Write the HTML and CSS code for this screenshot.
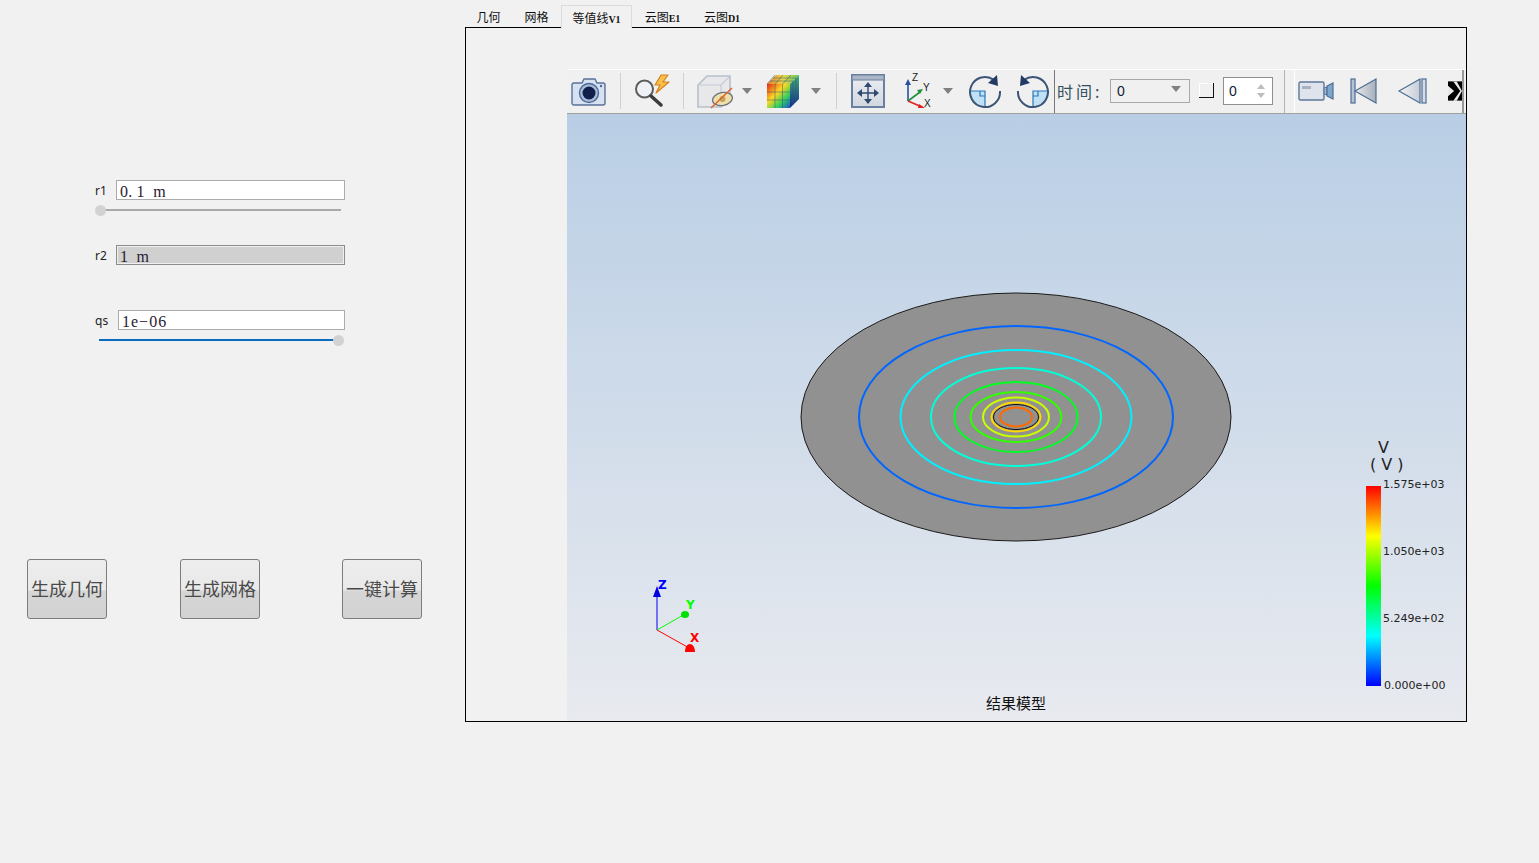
FILE: index.html
```html
<!DOCTYPE html>
<html lang="zh">
<head>
<meta charset="utf-8">
<title>结果模型</title>
<link rel="stylesheet" href="styles.css">
</head>
<body>
<main class="app">
  <section class="params">
    <div class="row row-r1">
      <span class="label label-r">r1</span>
      <div class="field">0. 1&nbsp; m</div>
    </div>
    <div class="slider slider-r1"><span class="thumb"></span></div>
    <div class="row row-r2">
      <span class="label label-r">r2</span>
      <div class="field field-off">1&nbsp; m</div>
    </div>
    <div class="row row-qs">
      <span class="label label-q">qs</span>
      <div class="field field-num">1e−06</div>
    </div>
    <div class="slider slider-qs"><span class="thumb"></span></div>
    <div class="actions">
      <button class="action">生成几何</button>
      <button class="action action-mesh">生成网格</button>
      <button class="action action-run">一键计算</button>
    </div>
  </section>

  <section class="workspace">
    <nav class="tabs">
      <span class="tab tab-a">几何</span>
      <span class="tab tab-b">网格</span>
      <span class="tab tab-active">等值线<span class="latin">V1</span></span>
      <span class="tab tab-c">云图<span class="latin">E1</span></span>
      <span class="tab tab-d">云图<span class="latin">D1</span></span>
    </nav>
    <div class="frame">
      <div class="viewer">
        <div class="toolbar">
          <svg class="ico i-camera" viewBox="0 0 36 36"><path d="M3 10h8l2-4h11l2 4h6a2 2 0 0 1 2 2v18a2 2 0 0 1-2 2H3a2 2 0 0 1-2-2V12a2 2 0 0 1 2-2z" fill="#d6e2f2" stroke="#5a7298" stroke-width="1.4"/><circle cx="18" cy="20" r="9.500" fill="#a9bcd8" stroke="#4f6a96" stroke-width="1.4"/><circle cx="18" cy="20" r="6.500" fill="#10204a"/><circle cx="30" cy="13" r="1.200" fill="#4f6a96"/></svg>
          <span class="sep s-a"></span>
          <svg class="ico i-mag" viewBox="0 0 36 36"><path d="M27 2l-6 10h5l-4 8 13-11h-6l5-7z" fill="#f6c04a" stroke="#d8801c" stroke-width="1.200" stroke-linejoin="round"/><circle cx="10.500" cy="16" r="8.500" fill="#eef1f5" stroke="#5c5c5c" stroke-width="2"/><path d="M17 23l10 9" stroke="#3c3c3c" stroke-width="3.500" stroke-linecap="round"/></svg>
          <span class="sep s-b"></span>
          <svg class="ico i-cube" viewBox="0 0 36 36"><path d="M1 12l9-9h23v22l-9 9H1z" fill="#e8e8ea" stroke="#b8c0cc" stroke-width="1.600"/><path d="M1 12h23v22M24 12l9-9" fill="none" stroke="#c4cad4" stroke-width="1.200"/><ellipse cx="25.500" cy="26" rx="10" ry="6.500" transform="rotate(-12 25.500 26)" fill="#f0dfa8" stroke="#6a7482" stroke-width="1.300"/><circle cx="25.500" cy="26" r="3" fill="#c0a460"/><path d="M14 35L35 15" stroke="#e0602a" stroke-width="1.400"/></svg>
          <svg class="caret c-a" viewBox="0 0 10 6"><path d="M0 0h10L5 6z"/></svg>
          <svg class="ico i-grid" viewBox="0 0 36 36"><defs><linearGradient id="cubeFace" x1="0" y1="0" x2="1" y2="1"><stop offset="0" stop-color="#e02818"/><stop offset=".4" stop-color="#ffd820"/><stop offset=".7" stop-color="#30d060"/><stop offset="1" stop-color="#2050d0"/></linearGradient><linearGradient id="cubeTop" x1="0" x2="1"><stop offset="0" stop-color="#e88030"/><stop offset=".5" stop-color="#e8d848"/><stop offset="1" stop-color="#60c860"/></linearGradient><linearGradient id="cubeSide" x1="0" y1="0" x2="0" y2="1"><stop offset="0" stop-color="#40b070"/><stop offset="1" stop-color="#102a90"/></linearGradient></defs><path d="M1 11l9-9h23l-9 9z" fill="url(#cubeTop)"/><path d="M24 11l9-9v24l-9 9z" fill="url(#cubeSide)"/><rect x="1" y="11" width="23" height="24" fill="url(#cubeFace)"/><path d="M9 11v24M16.500 11v24M1 19h23M1 27h23M9 2L1 11M17 2l-8 9M25 2l-8.500 9M4 8h23M7 5h23M27 8v24M30 5v24" stroke="#3a5070" stroke-width=".5" fill="none"/></svg>
          <svg class="caret c-b" viewBox="0 0 10 6"><path d="M0 0h10L5 6z"/></svg>
          <span class="sep s-c"></span>
          <svg class="ico i-fit" viewBox="0 0 36 36"><defs><linearGradient id="fitBg" x1="0" y1="0" x2="0" y2="1"><stop offset="0" stop-color="#eceef2"/><stop offset="1" stop-color="#d2d7e0"/></linearGradient></defs><rect x="2" y="2" width="32" height="32" fill="url(#fitBg)" stroke="#6a80a0" stroke-width="2"/><rect x="2" y="2" width="32" height="5" fill="#aab6c8" stroke="#6a80a0" stroke-width="1"/><path d="M18 12v16M10 20h16" stroke="#2f496f" stroke-width="1.400"/><path d="M18 9l-4 5h8zM18 31l-4-5h8zM7 20l5-4v8zM29 20l-5-4v8z" fill="#2f496f"/></svg>
          <svg class="ico i-axes" viewBox="0 0 36 36"><path d="M8 28V10" stroke="#2850a0" stroke-width="1.600"/><path d="M8 6l-3 6h6z" fill="#2850a0"/><path d="M8 28l12-9" stroke="#20903c" stroke-width="1.600"/><path d="M23 16l-6 1 3 4z" fill="#20903c"/><path d="M8 28l14 6" stroke="#e02020" stroke-width="1.600"/><path d="M25 35l-6-4-1 4z" fill="#e02020"/><text class="axis-tag" x="12" y="8">Z</text><text class="axis-tag" x="23" y="18">Y</text><text class="axis-tag" x="24" y="34">X</text></svg>
          <svg class="caret c-c" viewBox="0 0 10 6"><path d="M0 0h10L5 6z"/></svg>
          <svg class="ico i-rot" viewBox="0 0 36 36"><path d="M3 18h15v15A15 15 0 0 1 3 18z" fill="#bfe0f5"/><path d="M3 18h15v15M13 18v5h5" fill="none" stroke="#2a78b8" stroke-width="1.200"/><path d="M27 7A15 15 0 1 0 33 18" fill="none" stroke="#3c5476" stroke-width="2"/><path d="M30 2l1 11-10-3z" fill="#243a66"/></svg>
          <svg class="ico i-rot2" viewBox="0 0 36 36"><path d="M33 18H18v15a15 15 0 0 0 15-15z" fill="#bfe0f5"/><path d="M33 18H18v15M23 18v5h-5" fill="none" stroke="#2a78b8" stroke-width="1.200"/><path d="M9 7a15 15 0 1 1-6 11" fill="none" stroke="#3c5476" stroke-width="2"/><path d="M6 2L5 13l10-3z" fill="#243a66"/></svg>
          <span class="rule"></span>
          <span class="time">时间:</span>
          <div class="combo"><span>0</span><svg class="caret c-d" viewBox="0 0 10 6"><path d="M0 0h10L5 6z"/></svg></div>
          <span class="check"></span>
          <div class="spin"><span>0</span><span class="spin-arrows"><svg viewBox="0 0 8 5"><path d="M0 5h8L4 0z"/></svg><svg viewBox="0 0 8 5"><path d="M0 0h8L4 5z"/></svg></span></div>
          <span class="rule rule-light"></span>
          <div class="player">
            <svg class="ico i-video" viewBox="0 0 36 36"><rect x="1" y="9" width="25" height="18" rx="1.500" fill="#dfe4ec" stroke="#5d7698" stroke-width="1.400"/><rect x="4" y="13" width="9" height="3" fill="#a9b2c0"/><path d="M26 15l3-1v8l-3-1z" fill="#9fb7d4" stroke="#5d7698"/><path d="M29 13l6-3v16l-6-3z" fill="#7fa6cc" stroke="#4d6e94" stroke-width="1.200"/></svg>
            <svg class="ico i-first" viewBox="0 0 36 36"><defs><linearGradient id="playFill" x1="0" x2="1"><stop offset="0" stop-color="#e8ebef"/><stop offset="1" stop-color="#a8afb9"/></linearGradient><linearGradient id="playFill2" x1="0" x2="1"><stop offset="0" stop-color="#f4f5f7"/><stop offset="1" stop-color="#c6ccd6"/></linearGradient></defs><rect x="5" y="6" width="4" height="24" fill="#b6c3d4" stroke="#4d6e94" stroke-width="1.200"/><path d="M9 18L30 6v24z" fill="url(#playFill)" stroke="#4d6e94" stroke-width="1.200"/></svg>
            <svg class="ico i-prev" viewBox="0 0 36 36"><path d="M5 18L26 6v24z" fill="url(#playFill2)" stroke="#4d6e94" stroke-width="1.200"/><rect x="28" y="6" width="4" height="24" fill="#d5dce6" stroke="#4d6e94" stroke-width="1.200"/></svg>
            <svg class="i-next" viewBox="0 0 16 24"><path d="M0 1h16v22H0z" fill="#000"/><path d="M0 6l7 6-7 6zM6 1l8 11-8 11h4l6-11-6-11z" fill="#e8e8e8"/></svg>
          </div>
        </div>
        <div class="scene">
          <svg class="scene-art" viewBox="0 0 899 607">
            <g transform="translate(-567 -114)">
              <ellipse cx="1016" cy="417" rx="215" ry="124" fill="#919191" stroke="#1a1a1a" stroke-width="1"/>
              <ellipse class="iso" cx="1016" cy="417" rx="157" ry="91" stroke="#0066ff"/>
              <ellipse class="iso" cx="1016" cy="417" rx="115.500" ry="67" stroke="#00f0ff"/>
              <ellipse class="iso" cx="1016" cy="417" rx="85" ry="49" stroke="#00ffd8"/>
              <ellipse class="iso" cx="1016" cy="417" rx="61.500" ry="35" stroke="#00ff20"/>
              <ellipse class="iso" cx="1016" cy="417" rx="45.500" ry="25" stroke="#30ff00"/>
              <ellipse class="iso" cx="1016" cy="417" rx="33" ry="19.500" stroke="#c8ff00"/>
              <ellipse class="iso" cx="1016" cy="417" rx="24.500" ry="14.500" stroke="#ffd800"/>
              <ellipse class="iso-thin" cx="1016" cy="417" rx="22.500" ry="12.500"/>
              <ellipse class="iso" cx="1016" cy="417" rx="16" ry="9.500" stroke="#ff6a00"/>

              <path d="M657 630V590" stroke="#0000ff" stroke-width="1"/>
              <path d="M657 586l-4 11h8z" fill="#0000e0"/>
              <path d="M657 630l28-16" stroke="#00ff00" stroke-width="1"/>
              <ellipse cx="685" cy="614.500" rx="4" ry="3.500" fill="#00e000"/>
              <path d="M657 630l34 19" stroke="#ff0000" stroke-width="1"/>
              <path d="M685 652c0-5 2-8 5-8s5 4 5 8z" fill="#ff0000"/>
              <text class="axis-letter" x="658" y="589" fill="#0000ff">Z</text>
              <text class="axis-letter" x="686" y="609" fill="#00ff00">Y</text>
              <text class="axis-letter" x="690" y="642" fill="#ff0000">X</text>

              <rect x="1366" y="486" width="15" height="200" fill="url(#cbar)"/>
              <defs>
                <linearGradient id="cbar" x1="0" y1="0" x2="0" y2="1">
                  <stop offset="0" stop-color="#ff0000"/><stop offset=".25" stop-color="#ffff00"/><stop offset=".5" stop-color="#00ff00"/><stop offset=".75" stop-color="#00ffff"/><stop offset="1" stop-color="#0000ff"/>
                </linearGradient>
              </defs>
              <text class="legend-title" x="1378" y="453">V</text>
              <text class="legend-title" x="1370" y="470">( V )</text>
              <text class="legend-tick" x="1383" y="488">1.575e+03</text>
              <text class="legend-tick" x="1383" y="555">1.050e+03</text>
              <text class="legend-tick" x="1383" y="622">5.249e+02</text>
              <text class="legend-tick" x="1384" y="689">0.000e+00</text>
              <text class="model-title" x="1016" y="709">结果模型</text>
            </g>
          </svg>
        </div>
      </div>
    </div>
  </section>
</main>
</body>
</html>
```
FILE: styles.css
```css
* { box-sizing: border-box; }
html, body { margin: 0; height: 863px; overflow: hidden; }
body { background: #f1f1f1; color: #111; font-family: "Liberation Sans", "Noto Sans CJK SC", sans-serif; }
.app { display: flex; height: 863px; }

/* left parameter panel */
.params { width: 465px; flex: none; padding-top: 180px; }
.row { display: flex; align-items: center; width: 345px; padding-left: 95px; height: 20px; }
.row-r2 { margin-top: 29px; }
.row-qs { margin-top: 45px; }
.label { font: 12px/18px "Noto Sans", "Liberation Sans", sans-serif; color: #222; padding-top: 2px; }
.label-r { width: 21px; }
.label-q { width: 23px; }
.field { flex: 1; height: 20px; border: 1px solid #ababab; background: #fff; padding-left: 3px;
  font: 16px/21px "Liberation Serif", "Noto Sans CJK SC", serif; color: #2a2030; letter-spacing: .2px; white-space: nowrap; }
.field-num { letter-spacing: 1px; }
.field-off { border-color: #8c8c8c; background: #d0d0d0; box-shadow: inset 0 0 0 1px #efefef; padding-left: 3px; }

.slider { position: relative; height: 11px; margin-top: 5px; }
.slider::before { content: ""; position: absolute; top: 4px; height: 2px; }
.slider-r1 { margin-left: 95px; width: 246px; }
.slider-r1::before { left: 5px; right: 0; background: #a9a9a9; }
.slider-qs { margin-left: 99px; width: 245px; }
.slider-qs::before { left: 0; right: 5px; background: #0a6cbd; }
.thumb { position: absolute; top: 0; width: 11px; height: 11px; border-radius: 50%; background: #d2d2d2; }
.slider-r1 .thumb { left: 0; }
.slider-qs .thumb { right: 0; }

.actions { display: flex; padding-left: 27px; margin-top: 213px; }
.action { width: 80px; height: 60px; padding: 0 0 3px; border: 1px solid #7d7d7d; border-radius: 3px;
  background: linear-gradient(#ededed 0, #e9e9e9 52%, #d6d6d6 53%, #d2d2d2 100%);
  font: 18px/1 "Noto Sans CJK SC", sans-serif; color: #4a4a4a; white-space: nowrap; }
.action-mesh { margin-left: 73px; }
.action-run { margin-left: 82px; }

/* tab widget */
.workspace { width: 1002px; flex: none; padding-top: 5px; }
.tabs { display: flex; height: 22px; position: relative; z-index: 1; }
.tab { font: 12px/23px "Noto Sans CJK SC", sans-serif; color: #111; text-align: center; height: 22px; white-space: nowrap; }
.latin { font: 10px "Liberation Serif", serif; font-weight: 700; }
.tab-a { width: 47px; }
.tab-b { width: 47px; margin-left: 1px; }
.tab-active { width: 71px; margin-left: 1px; height: 23px; border: 1px solid #dcdcdc; border-bottom: 0; background: #f1f1f1; }
.tab-c { width: 59px; margin-left: 1px; }
.tab-d { width: 60px; }
.frame { height: 695px; border: 1px solid #000; padding: 41px 0 0 101px; }

/* viewer */
.viewer { width: 899px; height: 652px; display: flex; flex-direction: column; }
.toolbar { height: 45px; flex: none; display: flex; align-items: center; overflow: hidden; padding-bottom: 2px;
  border-top: 1px solid #fff; border-bottom: 1px solid #a0a0a0; background: #f0f0f0; }
.ico { width: 36px; height: 36px; flex: none; }
.sep { width: 1px; height: 36px; background: #d0d0d0; flex: none; }
.caret { width: 10px; height: 6px; flex: none; fill: #808080; }
.i-camera { margin-left: 4px; }
.s-a { margin-left: 13px; }
.i-mag { margin-left: 13px; }
.s-b { margin-left: 13px; }
.i-cube { margin-left: 13px; }
.c-a { margin-left: 9px; }
.i-grid { margin-left: 14px; }
.c-b { margin-left: 9px; }
.s-c { margin-left: 15px; }
.i-fit { margin-left: 13px; }
.i-axes { margin-left: 14px; }
.c-c { margin-left: 7px; }
.i-rot { margin-left: 14px; }
.i-rot2 { margin-left: 12px; }
.axis-tag { font: 10px "Liberation Sans", sans-serif; fill: #222; }
.rule { width: 1px; align-self: stretch; margin: 0 0 -2px 3px; background: #777; flex: none; }
.rule-light { background: #b4b4b4; margin-left: 11px; }
.time { width: 43px; margin-left: 2px; flex: none; font: 16px/22px "Noto Sans CJK SC", sans-serif; letter-spacing: 3px; color: #35505f; white-space: nowrap; }
.combo { width: 80px; height: 24px; margin-left: 10px; flex: none; display: flex; align-items: center; justify-content: space-between;
  padding: 0 8px 0 6px; border: 1px solid #a8a8a8; background: #f0f0f0; font: 14px "Liberation Sans", sans-serif; color: #123; }
.combo .caret { margin-top: -3px; }
.check { width: 15px; height: 15px; margin-left: 9px; flex: none; border-right: 1px solid #111; border-bottom: 1px solid #111; background: #f0f0f0; box-shadow: inset 1px 1px 0 #fff; }
.spin { width: 50px; height: 28px; margin-left: 9px; flex: none; display: flex; align-items: center; justify-content: space-between;
  padding: 0 7px 0 5px; border: 1px solid #8f8f8f; background: #fff; font: 14px "Liberation Sans", sans-serif; color: #123; }
.spin-arrows { display: flex; flex-direction: column; gap: 4px; }
.spin-arrows svg { display: block; width: 8px; height: 5px; fill: #bdbdbd; }
.player { margin: 0 0 -2px 9px; width: 170px; align-self: stretch; flex: none; display: flex; align-items: center; padding: 0 0 1px 4px;
  background: #f0f0f0; border-left: 1px solid #fff; border-right: 2px solid #9a9a9a; overflow: hidden; }
.player .ico { margin-right: 12px; }
.i-video { margin-left: -1px; }
.i-next { width: 14px; height: 22px; flex: none; margin-left: 6px; filter: blur(.6px); }

/* 3-D scene */
.scene { flex: 1; background: linear-gradient(#b9cee5 0, #e8eaef 100%); overflow: hidden; }
.scene-art { display: block; width: 899px; height: 607px; }
.iso { fill: none; stroke-width: 2; }
.iso-thin { fill: none; stroke: #111; stroke-width: 1; }
.axis-letter { font: bold 12px "DejaVu Sans", sans-serif; }
.legend-title { font: 16px "DejaVu Sans", sans-serif; fill: #222; }
.legend-tick { font: 11px "DejaVu Sans", sans-serif; fill: #222; }
.model-title { font: 15px "Noto Sans CJK SC", sans-serif; fill: #111; text-anchor: middle; }
```
